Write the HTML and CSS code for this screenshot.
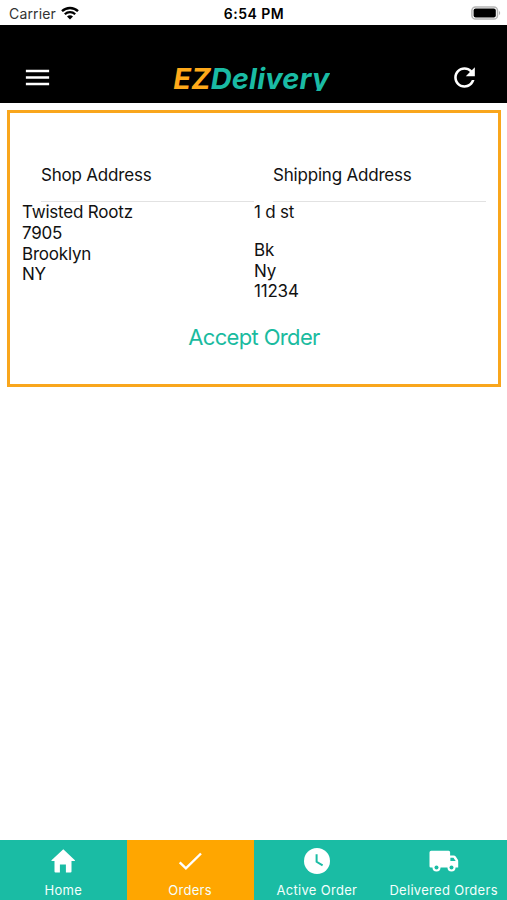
FILE: index.html
```html
<!DOCTYPE html>
<html lang="en">
<head>
    <meta charset="UTF-8">
    <meta name="viewport" content="width=device-width, initial-scale=1.0">
    <title>EZDelivery</title>
    <link rel="stylesheet" href="styles.css">
</head>
<body>

    <!-- Phone status bar -->
    <div class="status-bar">
        <div class="carrier">
            <span class="carrier-name">Carrier</span>
            <svg class="wifi" viewBox="0 0 18 14">
                <path d="M1 5.2a11.5 11.5 0 0 1 16 0" fill="none" stroke="#000" stroke-width="2.4"/>
                <path d="M3.8 8.2a7.4 7.4 0 0 1 10.4 0" fill="none" stroke="#000" stroke-width="2.2"/>
                <path d="M6 10.6a4.3 4.3 0 0 1 6 0L9 13.6z"/>
            </svg>
        </div>
        <div class="clock">6:54 PM</div>
        <div class="battery-holder">
            <svg class="battery" viewBox="0 0 30 14">
                <rect x="0.9" y="0.9" width="25.6" height="12.2" rx="3.6" fill="#fff" stroke="#b5b5b5" stroke-width="1.5"/>
                <rect x="2.6" y="2.6" width="22.2" height="8.8" rx="2"/>
                <path d="M28 5c1.6.5 1.6 3.5 0 4z" fill="#b5b5b5"/>
            </svg>
        </div>
    </div>

    <!-- App header -->
    <div class="header">
        <svg class="header-icon" viewBox="0 0 24 24"><path d="M3 18h18v-2H3v2zm0-5h18v-2H3v2zm0-7v2h18V6H3z"/></svg>
        <div class="logo"><span class="logo-ez">EZ</span>Delivery</div>
        <svg class="header-icon" viewBox="0 0 24 24"><path d="M17.65 6.35C16.2 4.9 14.21 4 12 4c-4.42 0-7.99 3.58-7.99 8s3.57 8 7.99 8c3.73 0 6.84-2.55 7.73-6h-2.08c-.82 2.33-3.04 4-5.65 4-3.31 0-6-2.69-6-6s2.69-6 6-6c1.66 0 3.14.69 4.22 1.78L13 11h7V4l-2.35 2.35z"/></svg>
    </div>

    <!-- Order card -->
    <div class="order">
        <div class="addresses">
            <div class="address">
                <div class="address-title">Shop Address</div>
                <div>Twisted Rootz</div>
                <div>7905</div>
                <div>Brooklyn</div>
                <div>NY</div>
            </div>
            <div class="address">
                <div class="address-title">Shipping Address</div>
                <div>1 d st</div>
                <div class="blank-line"></div>
                <div>Bk</div>
                <div>Ny</div>
                <div>11234</div>
            </div>
        </div>
        <div class="accept">Accept Order</div>
    </div>

    <!-- Bottom tabs -->
    <div class="tabs">
        <div class="tab">
            <svg class="tab-icon" viewBox="0 0 28 28"><path d="M14.300 2.300L2.500 13.200q-.4.900.6.900h2.400v10.500q0 1 1 1h4.400v-8.200h6v8.200h4.600q1 0 1-1V14.100h2.800q1 0 .6-.9z"/></svg>
            <span>Home</span>
        </div>
        <div class="tab active">
            <svg class="tab-icon" viewBox="0 0 28 28"><path d="M3.700 15.300l6.200 6L25 6.500" fill="none" stroke="#fff" stroke-width="2.400"/></svg>
            <span>Orders</span>
        </div>
        <div class="tab">
            <svg class="tab-icon" viewBox="0 0 28 28"><circle cx="14" cy="14" r="13"/><path class="hands" d="M13.600 7.200v7.600l6 3.600"/></svg>
            <span>Active Order</span>
        </div>
        <div class="tab">
            <svg class="tab-icon truck" viewBox="0 0 30 28">
                <path d="M2.200 3.800H19.600q1.500 0 1.500 1.500V8.600h3.600q1.300 0 2 1l2 3q.5.800.5 1.700v6.200H1.800q-1.300 0-1.300-1.300V5.500q0-1.700 1.700-1.700z"/>
                <path class="cutout" d="M21.400 10.700h3.100l2.200 3.400h-5.300z"/>
                <circle cx="7.500" cy="20.400" r="4"/>
                <circle cx="22.500" cy="20.400" r="4"/>
                <circle class="cutout" cx="7.500" cy="20.400" r="2"/>
                <circle class="cutout" cx="22.500" cy="20.400" r="2"/>
            </svg>
            <span>Delivered Orders</span>
        </div>
    </div>

</body>
</html>
```
FILE: styles.css
```css
body {
    margin: 0;
    height: 100vh;
    display: flex;
    flex-direction: column;
    background-color: #fff;
    font-family: Inter, sans-serif;
    font-size: 17px;
    color: #111;
    overflow: hidden;
}

.status-bar {
    display: grid;
    grid-template-columns: 1fr auto 1fr;
    align-items: center;
    height: 25px;
    padding: 1px 6px 0 9px;
    box-sizing: border-box;
    font-size: 14px;
}

.carrier {
    display: flex;
    align-items: center;
    gap: 5px;
    color: #333;
}

.carrier-name {
    letter-spacing: 0.15px;
}

.wifi {
    width: 18px;
    height: 14px;
}

.clock {
    margin-right: 2px;
    font-weight: 600;
    letter-spacing: 0.5px;
    color: #000;
}

.battery-holder {
    display: flex;
    justify-content: flex-end;
}

.battery {
    width: 30px;
    height: 14px;
}

.header {
    display: flex;
    justify-content: space-between;
    align-items: flex-start;
    height: 78px;
    padding: 37px 27px 0 22px;
    box-sizing: border-box;
    background-color: #000;
}

.header-icon {
    width: 31px;
    height: 31px;
    fill: #fff;
}

/* The box is shorter than the text, so the tail of the y is cut off */
.logo {
    height: 29px;
    line-height: 33px;
    padding-left: 1px;
    overflow: hidden;
    font-size: 29px;
    font-weight: 700;
    font-style: italic;
    letter-spacing: 0.2px;
    color: #1abba4;
}

.logo-ez {
    color: #ffa91a;
}

.order {
    margin: 7px 6px 0 7px;
    height: 277px;
    box-sizing: border-box;
    border: 3px solid #f9a61c;
    padding: 43px 12px 0;
}

.addresses {
    display: grid;
    grid-template-columns: 1fr 1fr;
    height: 167px;
}

.address {
    line-height: 20.8px;
    letter-spacing: -0.2px;
}

.address-title {
    height: 45px;
    line-height: 39px;
    margin-left: 19px;
    border-bottom: 1px solid #e2e2e2;
}

.blank-line {
    height: 17px;
}

.accept {
    text-align: center;
    font-size: 22px;
    line-height: 28px;
    letter-spacing: -0.65px;
    color: #1abb9f;
}

.tabs {
    display: grid;
    grid-template-columns: repeat(4, 1fr);
    height: 60px;
    margin-top: auto;
    background-color: #1abca4;
}

.tab {
    display: flex;
    flex-direction: column;
    align-items: center;
    padding-top: 7px;
    font-size: 13px;
    line-height: 16px;
    letter-spacing: 0.3px;
    white-space: nowrap;
    color: #f4fffc;
}

.tab.active {
    background-color: #ffa600;
}

.tab-icon {
    width: 28px;
    height: 28px;
    margin-bottom: 7px;
    fill: #fff;
}

.truck {
    width: 30px;
}

.hands {
    fill: none;
    stroke: #1abca4;
    stroke-width: 2;
}

.tab-icon .cutout {
    fill: #1abca4;
}
```
